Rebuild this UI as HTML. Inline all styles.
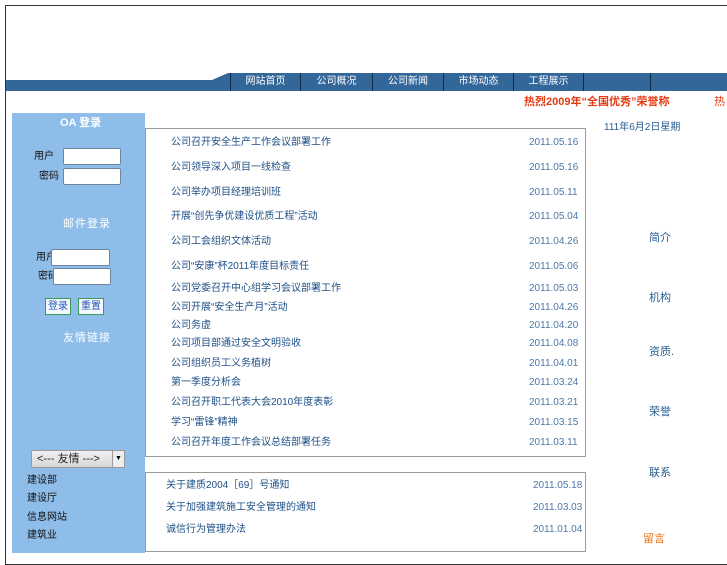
<!DOCTYPE html>
<html><head><meta charset="utf-8"><style>
*{margin:0;padding:0;box-sizing:border-box}
body{width:727px;height:545px;overflow:hidden;background:#fff;font-family:"Liberation Sans","Noto Sans CJK SC",sans-serif;font-size:10px;position:relative;line-height:12px}
.a{position:absolute;white-space:nowrap;line-height:12px}
.frame{position:absolute;left:5px;top:5px;width:730px;height:560px;border:1px solid #333}
.nav{position:absolute;left:228px;top:73px;width:500px;height:18px;background:#336699}
.navl{position:absolute;left:6px;top:80px;width:224px;height:11px;background:#336699}
.tri{position:absolute;left:212px;top:73px;width:0;height:0;border-bottom:7px solid #336699;border-left:16px solid transparent}
.ni{position:absolute;top:73px;height:18px;line-height:18px;color:#fff;font-size:10px;border-left:1px solid #0c2a4a}
.left{position:absolute;left:12px;top:113px;width:133px;height:440px;background:#8fbde9}
.w{color:#fff}
.inp{position:absolute;height:17px;background:#fff;border:1px solid #6f86a0;border-radius:2px}
.btn{position:absolute;width:26px;height:17px;border:1px solid #3a9a5a;background:#f4f8ff;color:#2858b8;text-align:center;line-height:15px;font-size:10px}
.box{position:absolute;left:145px;width:441px;border:1px solid #9a9a9a;background:#fff}
.t{position:absolute;left:171px;color:#1e4f86;font-size:10px;line-height:12px;white-space:nowrap}
.d{position:absolute;left:529px;color:#4a78a8;font-size:10px;line-height:12px}
.r{position:absolute;color:#2a5c90;font-size:11px;line-height:12px;white-space:nowrap}
.k{position:absolute;left:27px;color:#111;font-size:10px;line-height:12px;white-space:nowrap}
</style></head><body>
<div class="frame"></div>
<div class="navl"></div><div class="tri"></div><div class="nav"></div>
<div class="ni" style="left:230px;width:70px;text-align:center">网站首页</div>
<div class="ni" style="left:300px;width:72px;text-align:center">公司概况</div>
<div class="ni" style="left:372px;width:71px;text-align:center">公司新闻</div>
<div class="ni" style="left:443px;width:70px;text-align:center">市场动态</div>
<div class="ni" style="left:513px;width:70px;text-align:center">工程展示</div>
<div class="ni" style="left:583px;width:67px"></div>
<div class="ni" style="left:650px;width:80px"></div>
<div class="a" style="left:524px;top:96px;color:#e83a10;font-size:11px;font-weight:bold">热烈2009年“全国优秀”荣誉称</div>
<div class="a" style="left:714px;top:96px;color:#e83a10;font-size:11px">热</div>
<div class="left"></div>
<div class="a w" style="left:60px;top:117px;font-size:11px;font-weight:bold">OA 登录</div>
<div class="a" style="left:34px;top:151px;color:#111">用户</div>
<div class="inp" style="left:63px;top:148px;width:58px"></div>
<div class="a" style="left:39px;top:171px;color:#111">密码</div>
<div class="inp" style="left:63px;top:168px;width:58px"></div>
<div class="a w" style="left:63px;top:218px;font-size:11px;letter-spacing:1px">邮件登录</div>
<div class="a" style="left:36px;top:252px;color:#111">用户</div>
<div class="inp" style="left:51px;top:249px;width:59px"></div>
<div class="a" style="left:38px;top:271px;color:#111">密码</div>
<div class="inp" style="left:53px;top:268px;width:58px"></div>
<div class="btn" style="left:45px;top:298px">登录</div>
<div class="btn" style="left:78px;top:298px">重置</div>
<div class="a w" style="left:63px;top:332px;font-size:11px;letter-spacing:1px">友情链接</div>
<div class="a" style="left:31px;top:450px;width:94px;height:18px;border:1px solid #999;border-radius:2px;background:linear-gradient(#f0f0f0,#d8d8d8);font-size:11px;line-height:16px;padding-left:5px;color:#222">&lt;--- 友情 ---&gt;</div>
<div class="a" style="left:112px;top:450px;width:13px;height:18px;border:1px solid #999;background:#eee;font-size:7px;line-height:16px;text-align:center">▼</div>
<div class="k" style="top:475px">建设部</div>
<div class="k" style="top:493px">建设厅</div>
<div class="k" style="top:512px">信息网站</div>
<div class="k" style="top:530px">建筑业</div>
<div class="box" style="top:128px;height:329px"></div>
<div class="t" style="top:137px">公司召开安全生产工作会议部署工作</div><div class="d" style="top:137px">2011.05.16</div>
<div class="t" style="top:162px">公司领导深入项目一线检查</div><div class="d" style="top:162px">2011.05.16</div>
<div class="t" style="top:187px">公司举办项目经理培训班</div><div class="d" style="top:187px">2011.05.11</div>
<div class="t" style="top:211px">开展“创先争优建设优质工程”活动</div><div class="d" style="top:211px">2011.05.04</div>
<div class="t" style="top:236px">公司工会组织文体活动</div><div class="d" style="top:236px">2011.04.26</div>
<div class="t" style="top:261px">公司“安康”杯2011年度目标责任</div><div class="d" style="top:261px">2011.05.06</div>
<div class="t" style="top:283px">公司党委召开中心组学习会议部署工作</div><div class="d" style="top:283px">2011.05.03</div>
<div class="t" style="top:302px">公司开展“安全生产月”活动</div><div class="d" style="top:302px">2011.04.26</div>
<div class="t" style="top:320px">公司务虚</div><div class="d" style="top:320px">2011.04.20</div>
<div class="t" style="top:338px">公司项目部通过安全文明验收</div><div class="d" style="top:338px">2011.04.08</div>
<div class="t" style="top:358px">公司组织员工义务植树</div><div class="d" style="top:358px">2011.04.01</div>
<div class="t" style="top:377px">第一季度分析会</div><div class="d" style="top:377px">2011.03.24</div>
<div class="t" style="top:397px">公司召开职工代表大会2010年度表彰</div><div class="d" style="top:397px">2011.03.21</div>
<div class="t" style="top:417px">学习“雷锋”精神</div><div class="d" style="top:417px">2011.03.15</div>
<div class="t" style="top:437px">公司召开年度工作会议总结部署任务</div><div class="d" style="top:437px">2011.03.11</div>
<div class="box" style="top:472px;height:80px"></div>
<div class="t" style="left:166px;top:480px">关于建质2004［69］号通知</div><div class="d" style="left:533px;top:480px">2011.05.18</div>
<div class="t" style="left:166px;top:502px">关于加强建筑施工安全管理的通知</div><div class="d" style="left:533px;top:502px">2011.03.03</div>
<div class="t" style="left:166px;top:524px">诚信行为管理办法</div><div class="d" style="left:533px;top:524px">2011.01.04</div>
<div class="a" style="left:604px;top:122px;color:#2a5c90;font-size:10px">111年6月2日星期</div>
<div class="r" style="left:649px;top:232px">简介</div>
<div class="r" style="left:649px;top:292px">机构</div>
<div class="r" style="left:649px;top:346px">资质.</div>
<div class="r" style="left:649px;top:406px">荣誉</div>
<div class="r" style="left:649px;top:467px">联系</div>
<div class="r" style="left:643px;top:533px;color:#f07010">留言</div>
</body></html>
